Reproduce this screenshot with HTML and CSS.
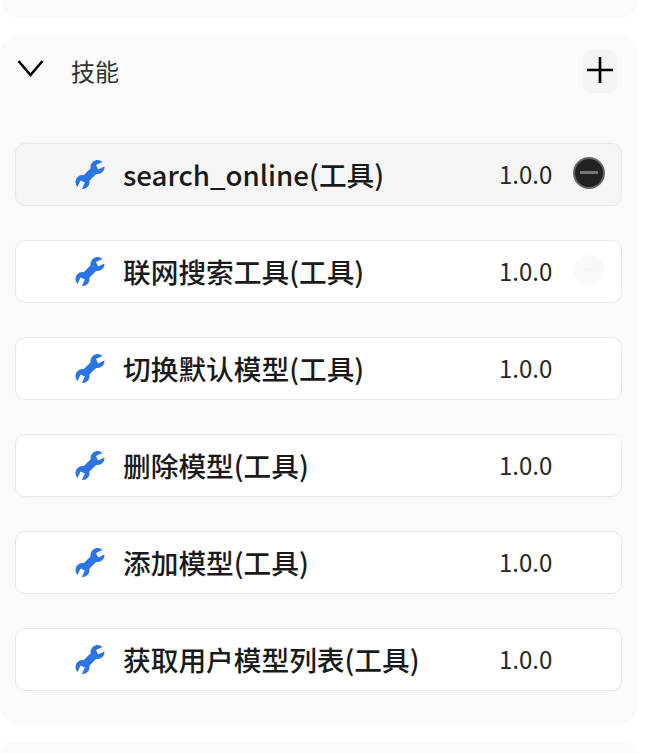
FILE: index.html
```html
<!DOCTYPE html>
<html lang="zh-CN">
<head>
<meta charset="utf-8">
<title>技能</title>
<link rel="stylesheet" href="styles.css">
</head>
<body>
<svg class="defs" width="0" height="0" aria-hidden="true">
  <symbol id="wrench" viewBox="0 0.5 30 30">
    <path d="M29.48 6.89A7 7 0 1 1 27.44 2.55L21.03 5.54L23.07 9.88ZM17.2 7.14L22.86 12.8L12.8 22.86L7.14 17.2ZM2.55 27.44A7 7 0 1 1 6.89 29.48L9.88 23.07L5.54 21.03Z"/>
  </symbol>
</svg>
<div class="page">
  <div class="panel panel-top"></div>
  <section class="panel panel-skills">
    <header class="skills-head">
      <svg class="chevron" viewBox="0 0 29 20"><path d="M2.5 3L14.5 17L26.5 3"/></svg>
      <h2 class="skills-title">技能</h2>
      <button class="add-btn" aria-label="添加">
        <svg viewBox="0 0 28 28"><path d="M14 1V27M1 14H27"/></svg>
      </button>
    </header>
    <ul class="skill-list">
      <li class="skill skill-hover">
        <svg class="wrench"><use href="#wrench"/></svg>
        <span class="skill-name">search_online(工具)</span>
        <span class="skill-version">1.0.0</span>
        <span class="remove remove-dark"><i></i></span>
      </li>
      <li class="skill">
        <svg class="wrench"><use href="#wrench"/></svg>
        <span class="skill-name">联网搜索工具(工具)</span>
        <span class="skill-version">1.0.0</span>
        <span class="remove remove-faint"><i></i></span>
      </li>
      <li class="skill">
        <svg class="wrench"><use href="#wrench"/></svg>
        <span class="skill-name">切换默认模型(工具)</span>
        <span class="skill-version">1.0.0</span>
        <span class="remove"></span>
      </li>
      <li class="skill">
        <svg class="wrench"><use href="#wrench"/></svg>
        <span class="skill-name">删除模型(工具)</span>
        <span class="skill-version">1.0.0</span>
        <span class="remove"></span>
      </li>
      <li class="skill">
        <svg class="wrench"><use href="#wrench"/></svg>
        <span class="skill-name">添加模型(工具)</span>
        <span class="skill-version">1.0.0</span>
        <span class="remove"></span>
      </li>
      <li class="skill">
        <svg class="wrench"><use href="#wrench"/></svg>
        <span class="skill-name">获取用户模型列表(工具)</span>
        <span class="skill-version">1.0.0</span>
        <span class="remove"></span>
      </li>
    </ul>
  </section>
  <div class="panel panel-bottom"></div>
</div>
</body>
</html>
```
FILE: styles.css
```css
html, body {
  margin: 0;
  padding: 0;
  height: 100%;
  background: #fff;
  overflow: hidden;
}
body {
  font-family: "Noto Sans CJK SC", "Noto Sans", sans-serif;
  color: #1f1f1f;
}
.defs { position: absolute; }
.page {
  display: flex;
  flex-direction: column;
  gap: 16px;
  width: 638px;
}
.panel {
  background: #fafafa;
  border-radius: 20px;
}
.panel-top {
  height: 18px;
  border-radius: 0 0 20px 20px;
}
.panel-bottom {
  height: 13px;
  border-radius: 20px 20px 0 0;
  flex: none;
}
.panel-skills {
  padding: 16px 21px 34px 15px;
  flex: none;
}
.skills-head {
  display: flex;
  align-items: flex-start;
  height: 93px;
}
.chevron {
  width: 29px;
  height: 20px;
  margin: 8px 0 0 1px;
  fill: none;
  stroke: #000;
  stroke-width: 2.6;
  flex: none;
}
.skills-title {
  margin: 4px 0 0 26px;
  flex: 1;
  font-size: 24px;
  line-height: 34px;
  font-weight: 400;
  color: #333;
}
.add-btn {
  width: 34px;
  height: 43px;
  padding: 0 0 3px;
  border: 0;
  border-radius: 8px;
  background: #f4f4f4;
  display: flex;
  align-items: center;
  justify-content: center;
}
.add-btn svg {
  width: 28px;
  height: 28px;
  fill: none;
  stroke: #000;
  stroke-width: 2.6;
}
.skill-list {
  list-style: none;
  margin: 0 -5px 0 0;
  padding: 0;
  display: flex;
  flex-direction: column;
  gap: 34px;
}
.skill {
  box-sizing: border-box;
  height: 63px;
  display: flex;
  align-items: center;
  padding: 0 16px 0 58.5px;
  background: #fff;
  border: 1px solid #e8e8e8;
  border-radius: 10px;
}
.skill-hover { background: #f5f5f5; }
.wrench {
  width: 30px;
  height: 30px;
  fill: #2b74e4;
  flex: none;
}
.skill-name {
  flex: 1;
  margin: -2px 0 0 18.5px;
  font-size: 27.7px;
  font-weight: 500;
  line-height: 40px;
  color: #1a1a1a;
}
.skill-version {
  width: 52px;
  margin-top: -2px;
  font-size: 24px;
  line-height: 34px;
  color: #262626;
  white-space: nowrap;
}
.remove {
  box-sizing: border-box;
  width: 32px;
  height: 32px;
  margin: -4px 0 0 22px;
  border-radius: 50%;
  display: flex;
  align-items: center;
  justify-content: center;
}
.remove i {
  display: block;
  width: 18px;
  height: 3px;
}
.remove-dark {
  background: #222;
  border: 2px solid #666;
}
.remove-dark i { background: #777; }
.remove-faint {
  background: #f9f9f9;
  border: 1px solid #fcfcfc;
}
.remove-faint i { background: #f7f7f7; }
```
